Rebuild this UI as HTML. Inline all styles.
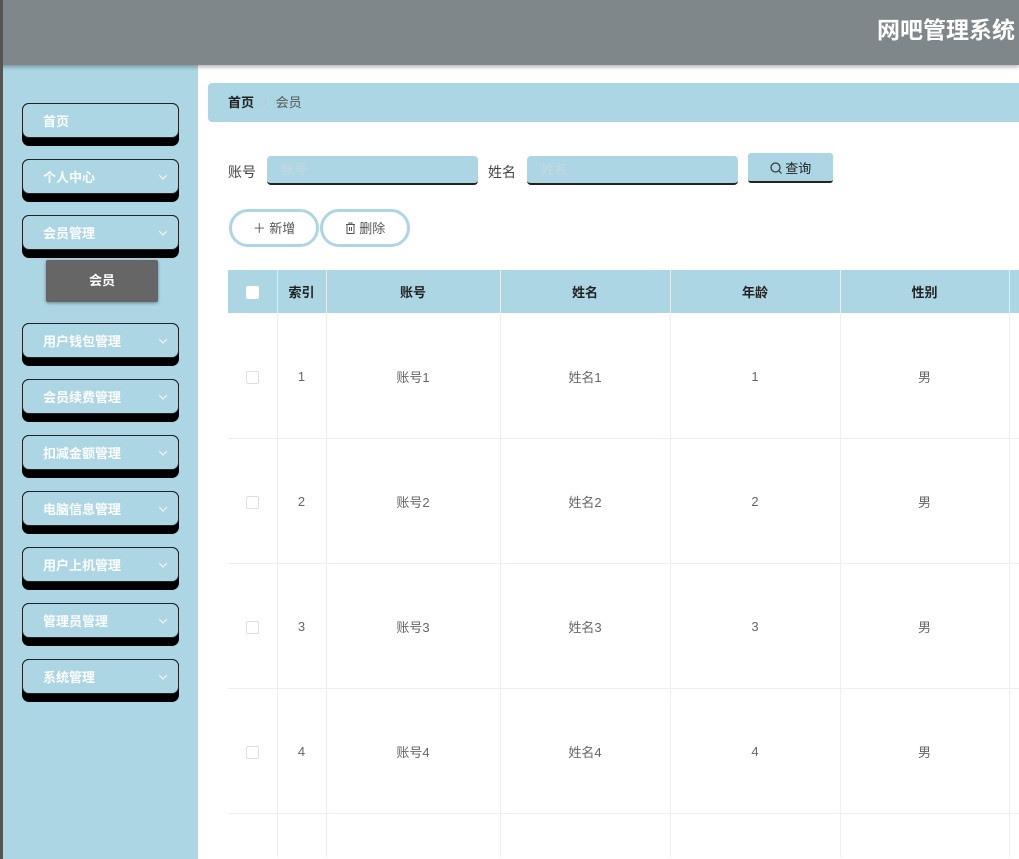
<!DOCTYPE html>
<html style="width:1019px;height:859px;overflow:hidden"><head><meta charset="utf-8"><style>
*{box-sizing:border-box;margin:0;padding:0}
body{width:1019px;height:859px;overflow:hidden;font-family:"Liberation Sans","Noto Sans CJK SC",sans-serif;background:#fff;position:relative;font-size:13px;color:#333}
.hdr{position:absolute;left:0;top:0;width:1019px;height:65px;background:#7f878a;box-shadow:0 2px 4px rgba(0,0,0,.3);z-index:2}
.hdr .t{position:absolute;right:4px;top:11px;color:#fff;font-size:23px;font-weight:bold}
.edge{position:absolute;left:0;top:0;width:3px;height:859px;background:#555;z-index:3}
.side{position:absolute;left:0;top:65px;width:198px;height:794px;background:#acd6e4}
.mi{position:absolute;left:22px;width:157px;height:43px;background:#000;border-radius:7px}
.mi div{height:35px;background:#acd6e4;border:1px solid #222;border-radius:7px;color:#fff;font-weight:bold;padding-left:20px;line-height:36px;font-size:13px;position:relative}
.mi svg{position:absolute;right:10px;top:14px}
.sub{position:absolute;left:46px;top:260px;width:112px;height:42px;background:#666;color:#fff;font-weight:bold;text-align:center;line-height:42px;border-radius:2px;box-shadow:0 1px 3px rgba(0,0,0,.4)}
.bc{position:absolute;left:208px;top:83px;width:811px;height:39px;background:#acd6e4;border-radius:4px 0 0 4px;line-height:39px;padding-left:20px;font-size:13px}
.lbl{position:absolute;top:162px;font-size:14px;color:#444}
.inp{position:absolute;top:156px;height:29px;width:211px;background:#acd6e4;border-radius:4px;border-bottom:2px solid #222;color:#c7d8e0;padding-left:14px;line-height:28px}
.qb{position:absolute;left:748px;top:153px;width:85px;height:30px;background:#acd6e4;border-radius:3px;border-bottom:2px solid #222;text-align:center;line-height:32px;font-size:13px;color:#222}
.pb{position:absolute;top:209px;height:38px;border:3px solid #acd6e4;border-radius:20px;text-align:center;line-height:34px;color:#555;background:#fff}
.tw{position:absolute;left:228px;top:270px;width:791px;height:589px;overflow:hidden}
table{width:801px;border-collapse:collapse;table-layout:fixed}
th{background:#acd6e4;height:43px;font-weight:bold;color:#222;border-right:1px solid #e6eef2;font-size:13px}
td{height:125px;text-align:center;border-right:1px solid #ebeef5;border-bottom:1px solid #ebeef5;color:#666;font-size:13px;padding-top:2px}
tr.last td{height:44px;border-bottom:none}
.cb{display:inline-block;width:13px;height:13px;border:1px solid #dcdfe6;background:#fff;border-radius:2px;vertical-align:middle}
</style></head><body>
<div class="edge"></div>
<div class="hdr"><div class="t">网吧管理系统</div></div>
<div class="side"></div>
<div class="mi" style="top:103px"><div>首页</div></div>
<div class="mi" style="top:159px"><div>个人中心<svg width="10" height="6"><path d="M1 1l4 4 4-4" fill="none" stroke="#fff" stroke-width="1"/></svg></div></div>
<div class="mi" style="top:215px"><div>会员管理<svg width="10" height="6"><path d="M1 1l4 4 4-4" fill="none" stroke="#fff" stroke-width="1"/></svg></div></div>
<div class="sub">会员</div>
<div class="mi" style="top:323px"><div>用户钱包管理<svg width="10" height="6"><path d="M1 1l4 4 4-4" fill="none" stroke="#fff"/></svg></div></div>
<div class="mi" style="top:379px"><div>会员续费管理<svg width="10" height="6"><path d="M1 1l4 4 4-4" fill="none" stroke="#fff"/></svg></div></div>
<div class="mi" style="top:435px"><div>扣减金额管理<svg width="10" height="6"><path d="M1 1l4 4 4-4" fill="none" stroke="#fff"/></svg></div></div>
<div class="mi" style="top:491px"><div>电脑信息管理<svg width="10" height="6"><path d="M1 1l4 4 4-4" fill="none" stroke="#fff"/></svg></div></div>
<div class="mi" style="top:547px"><div>用户上机管理<svg width="10" height="6"><path d="M1 1l4 4 4-4" fill="none" stroke="#fff"/></svg></div></div>
<div class="mi" style="top:603px"><div>管理员管理<svg width="10" height="6"><path d="M1 1l4 4 4-4" fill="none" stroke="#fff"/></svg></div></div>
<div class="mi" style="top:659px"><div>系统管理<svg width="10" height="6"><path d="M1 1l4 4 4-4" fill="none" stroke="#fff"/></svg></div></div>

<div class="bc"><b style="color:#222">首页</b><span style="color:#c0c4cc;margin:0 9px">/</span><span style="color:#555">会员</span></div>
<div class="lbl" style="left:228px">账号</div>
<div class="inp" style="left:267px">账号</div>
<div class="lbl" style="left:488px">姓名</div>
<div class="inp" style="left:527px">姓名</div>
<div class="qb"><svg width="12" height="12" style="vertical-align:-1px"><circle cx="5.5" cy="5.5" r="4.5" fill="none" stroke="#333" stroke-width="1.2"/><path d="M9 9l2.5 2.5" stroke="#333" stroke-width="1.2"/></svg> 查询</div>
<div class="pb" style="left:229px;width:90px">＋ 新增</div>
<div class="pb" style="left:320px;width:90px"><svg width="11" height="12" style="vertical-align:-1px"><path d="M1 2.5h9M4 2.5V1h3v1.5M2 2.5v9h7v-9M4.5 5v4M6.5 5v4" fill="none" stroke="#555"/></svg> 删除</div>

<div class="tw"><table>
<colgroup><col style="width:49px"><col style="width:49px"><col style="width:174px"><col style="width:170px"><col style="width:170px"><col style="width:169px"><col style="width:20px"></colgroup>
<tr><th><span class="cb" style="border:none"></span></th><th>索引</th><th>账号</th><th>姓名</th><th>年龄</th><th>性别</th><th></th></tr>
<tr><td><span class="cb"></span></td><td>1</td><td>账号1</td><td>姓名1</td><td>1</td><td>男</td><td></td></tr>
<tr><td><span class="cb"></span></td><td>2</td><td>账号2</td><td>姓名2</td><td>2</td><td>男</td><td></td></tr>
<tr><td><span class="cb"></span></td><td>3</td><td>账号3</td><td>姓名3</td><td>3</td><td>男</td><td></td></tr>
<tr><td><span class="cb"></span></td><td>4</td><td>账号4</td><td>姓名4</td><td>4</td><td>男</td><td></td></tr>
<tr class="last"><td></td><td></td><td></td><td></td><td></td><td></td><td></td></tr>
</table></div>
</body></html>
